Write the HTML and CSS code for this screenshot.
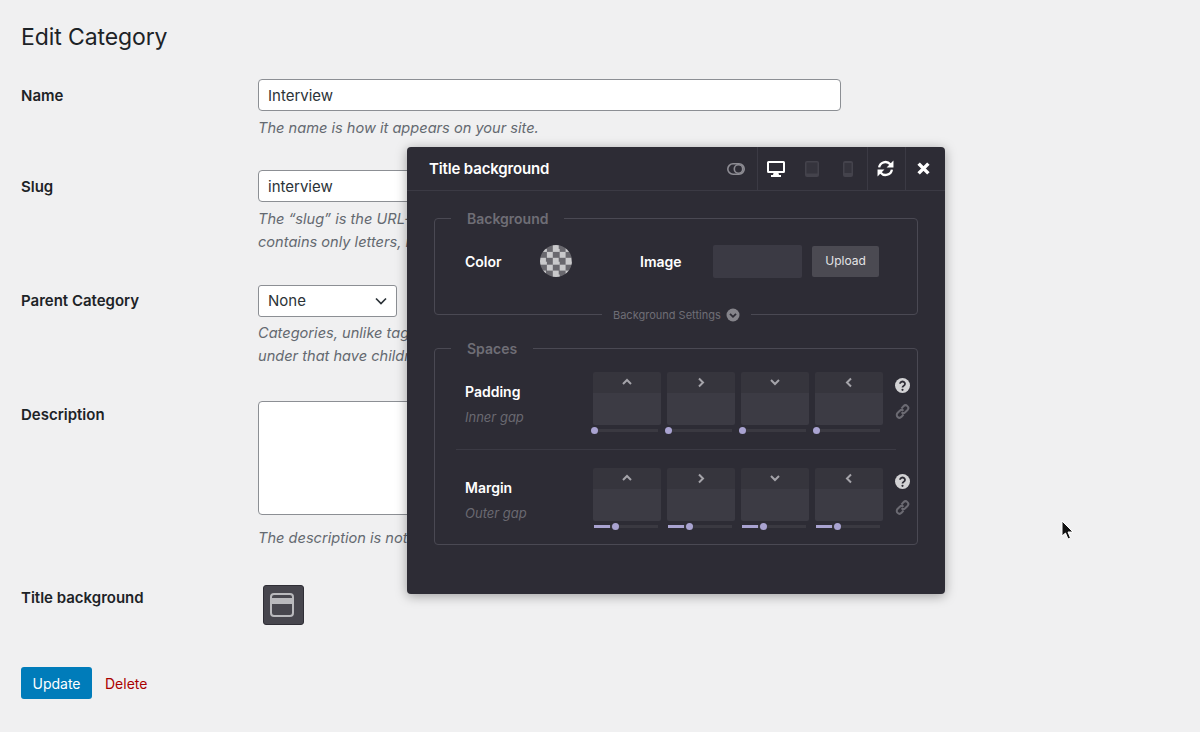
FILE: index.html
```html
<!DOCTYPE html>
<html lang="en">
<head>
    <meta charset="UTF-8">
    <title>Edit Category</title>
    <link rel="stylesheet" href="styles.css">
</head>
<body>

    <!-- Category form -->
    <div class="wrap">
        <h1>Edit Category</h1>

        <div class="form-row row-name">
            <label class="form-label">Name</label>
            <div>
                <input class="text-input" type="text" value="Interview">
                <p class="help">The name is how it appears on your site.</p>
            </div>
        </div>

        <div class="form-row row-slug">
            <label class="form-label">Slug</label>
            <div>
                <input class="text-input" type="text" value="interview">
                <p class="help">The “slug” is the URL-friendly version of the name. It is usually all lowercase and<br>contains only letters, numbers, and hyphens.</p>
            </div>
        </div>

        <div class="form-row row-parent">
            <label class="form-label">Parent Category</label>
            <div>
                <select class="select-input"><option>None</option></select>
                <p class="help help-tight">Categories, unlike tags, can have a hierarchy. You might have a Jazz category, and<br>under that have children categories for Bebop and Big Band. Totally optional.</p>
            </div>
        </div>

        <div class="form-row row-description">
            <label class="form-label">Description</label>
            <div>
                <textarea class="text-area"></textarea>
                <p class="help help-wide">The description is not prominent by default; however, some themes may show it.</p>
            </div>
        </div>

        <div class="form-row row-title-bg">
            <label class="form-label">Title background</label>
            <div>
                <button class="bg-trigger" type="button">
                    <svg width="24" height="24" viewBox="0 0 24 24">
                        <rect x="1" y="1" width="22" height="22" rx="3" fill="none" stroke="#b9b9bd" stroke-width="2"/>
                        <rect x="2" y="5" width="20" height="6" fill="#b9b9bd"/>
                    </svg>
                </button>
            </div>
        </div>

        <div class="form-actions">
            <button class="btn-update" type="button">Update</button>
            <a class="link-delete" href="#">Delete</a>
        </div>
    </div>

    <!-- Floating options panel -->
    <div class="panel">
        <div class="panel-head">
            <span class="panel-title">Title background</span>
            <div class="head-tool tool-toggle">
                <svg width="18" height="12" viewBox="0 0 18 12">
                    <rect x="0.800" y="0.800" width="16.400" height="10.400" rx="5.200" fill="none" stroke="#8d8c93" stroke-width="1.600"/>
                    <circle cx="11.500" cy="6" r="4.200" fill="none" stroke="#8d8c93" stroke-width="1.600"/>
                </svg>
            </div>
            <div class="head-tool tool-devices">
                <span class="device-slot">
                    <svg width="18" height="16" viewBox="0 0 18 16">
                        <path fill="#fff" fill-rule="evenodd" d="M1.500 0h15A1.500 1.500 0 0 1 18 1.500v9a1.500 1.500 0 0 1-1.500 1.500h-5l.5 2h2v2H4v-2h2l.5-2h-5A1.500 1.500 0 0 1 0 10.500v-9A1.500 1.500 0 0 1 1.500 0zM2 2v8h14V2z"/>
                    </svg>
                </span>
                <span class="device-slot">
                    <svg width="14" height="16" viewBox="0 0 14 16">
                        <rect width="14" height="16" rx="2" fill="#44434c"/><rect x="1.500" y="1.500" width="11" height="11" fill="#35343d"/>
                    </svg>
                </span>
                <span class="device-slot">
                    <svg width="10" height="16" viewBox="0 0 10 16">
                        <rect width="10" height="16" rx="2" fill="#44434c"/><rect x="1.500" y="2" width="7" height="10" fill="#35343d"/>
                    </svg>
                </span>
            </div>
            <div class="head-tool tool-reset">
                <svg width="17" height="17" viewBox="0 0 16 16" fill="none" stroke="#fff" stroke-width="2.200">
                    <path d="M2 7a6 6 0 0 1 10.500-3L14 5.500"/><path d="M14 9a6 6 0 0 1-10.500 3L2 10.500"/>
                    <path fill="#fff" stroke="none" d="M15.500 0.500v6.500H9zM0.500 15.500V9H7z"/>
                </svg>
            </div>
            <div class="head-tool tool-close">
                <svg width="13" height="13" viewBox="0 0 12 12" stroke="#fff" stroke-width="3.200">
                    <path d="M1.500 1.500l9 9M10.500 1.500l-9 9"/>
                </svg>
            </div>
        </div>

        <div class="panel-body">
            <fieldset class="group group-bg">
                <legend>Background</legend>
                <div class="bg-row">
                    <span class="opt-label label-color">Color</span>
                    <span class="swatch"></span>
                    <span class="opt-label label-image">Image</span>
                    <span class="image-field"></span>
                    <button class="btn-upload" type="button">Upload</button>
                </div>
                <div class="bg-settings">
                    Background Settings
                    <svg width="14" height="14" viewBox="0 0 14 14">
                        <circle cx="7" cy="7" r="6.500" fill="#85848b"/>
                        <path d="M4 5.800l3 3 3-3" fill="none" stroke="#2d2c35" stroke-width="1.800"/>
                    </svg>
                </div>
            </fieldset>

            <fieldset class="group group-spaces">
                <legend>Spaces</legend>
                <div class="space-row" id="padding-row" data-label="Padding" data-hint="Inner gap" data-value="0"></div>
                <div class="space-row space-margin" id="margin-row" data-label="Margin" data-hint="Outer gap" data-value="1"></div>
            </fieldset>
        </div>
    </div>

    <!-- Mouse pointer -->
    <svg class="pointer" width="14" height="20" viewBox="0 0 14 20">
        <path d="M1 1v15l3.500-3 2.500 6 2.500-1-2.500-6H12z" fill="#111" stroke="#fff" stroke-width="1"/>
    </svg>

    <script>
        // Chevron for each side, in CSS box order
        const sides = ['M2 7l4-4 4 4', 'M4 1.500l4 4-4 4', 'M2 3l4 4 4-4', 'M8 1.500l-4 4 4 4'];

        // Fill the padding and margin rows with their four boxes
        document.querySelectorAll('.space-row').forEach((row) => {
            const moved = row.dataset.value === '1';

            const boxes = sides.map((d) => `
                <div class="space-box">
                    <div class="box-head">
                        <svg width="12" height="11" viewBox="0 0 12 11" fill="none" stroke="#a5a4aa" stroke-width="2"><path d="${d}"/></svg>
                    </div>
                    <div class="box-value"></div>
                    <div class="slider ${moved ? 'slider-moved' : ''}">
                        <span class="slider-fill"></span>
                        <span class="slider-thumb"></span>
                    </div>
                </div>
            `).join('');

            row.innerHTML = `
                <div class="space-text">
                    <span class="opt-label">${row.dataset.label}</span>
                    <span class="hint">${row.dataset.hint}</span>
                </div>
                <div class="space-boxes">${boxes}</div>
                <div class="space-tools">
                    <svg width="15" height="15" viewBox="0 0 15 15">
                        <circle cx="7.500" cy="7.500" r="7.500" fill="#d2d2d4"/>
                        <path d="M5 5.800a2.500 2.300 0 1 1 3.800 2c-.8.500-1.300.8-1.300 1.700" fill="none" stroke="#2d2c35" stroke-width="1.800"/>
                        <circle cx="7.500" cy="11.800" r="1.100" fill="#2d2c35"/>
                    </svg>
                    <svg width="15" height="15" viewBox="0 0 15 15" fill="none" stroke="#6b6a72" stroke-width="2">
                        <path d="M6.500 4.500l2-2.300a2.700 2.700 0 0 1 4 3.800l-2.300 2.300a2.700 2.700 0 0 1-3.700 0"/>
                        <path d="M8.500 10.500l-2 2.300a2.700 2.700 0 0 1-4-3.800l2.300-2.300a2.700 2.700 0 0 1 3.700 0"/>
                    </svg>
                </div>
            `;
        });
    </script>

</body>
</html>
```

FILE: styles.css
```css
* {
    box-sizing: border-box;
}

body {
    margin: 0;
    height: 732px;
    overflow: hidden;
    background: #f0f0f1;
    color: #1d2327;
    font-family: 'Inter', sans-serif;
    font-size: 15px;
}

.wrap {
    padding: 22px 0 0 21px;
}

h1 {
    margin: 0 0 27px;
    font-size: 23px;
    font-weight: 400;
    line-height: 30px;
    letter-spacing: -0.1px;
}

.form-row {
    display: flex;
}

.row-name { margin-bottom: 30px; }
.row-slug { margin-bottom: 31px; }
.row-parent { margin-bottom: 33px; }
.row-description { margin-bottom: 35px; }
.row-title-bg { margin-bottom: 42px; }

.form-label {
    width: 237px;
    flex: none;
    padding-top: 8px;
    font-weight: 600;
    line-height: 18px;
}

.row-parent .form-label {
    padding-top: 7px;
}

.row-description .form-label {
    padding-top: 5px;
}

.row-title-bg .form-label {
    padding-top: 4px;
}

.text-input {
    display: block;
    width: 583px;
    height: 32px;
    padding: 0 9px;
    border: 1px solid #8c8f94;
    border-radius: 4px;
    background: #fff;
    color: #2c3338;
    font-family: inherit;
    font-size: 15px;
}

.select-input {
    display: block;
    width: 139px;
    height: 32px;
    padding: 0 0 2px 9px;
    border: 1px solid #8c8f94;
    border-radius: 3px;
    appearance: none;
    background: #fff url("data:image/svg+xml,%3Csvg xmlns='http://www.w3.org/2000/svg' width='12' height='8'%3E%3Cpath d='M1 1.500l5 5 5-5' fill='none' stroke='%232c3338' stroke-width='1.700'/%3E%3C/svg%3E") no-repeat right 9px center;
    color: #2c3338;
    font-family: inherit;
    font-size: 15px;
}

.text-area {
    display: block;
    width: 583px;
    height: 114px;
    border: 1px solid #8c8f94;
    border-radius: 4px;
    background: #fff;
    resize: none;
}

.help {
    margin: 6px 0 0;
    color: #646970;
    font-size: 14.6px;
    font-style: italic;
    line-height: 23px;
    white-space: nowrap;
}

.help-tight {
    margin-top: 5px;
}

.help-wide {
    margin-top: 12px;
}

.bg-trigger {
    display: flex;
    align-items: center;
    justify-content: center;
    width: 41px;
    height: 40px;
    margin: 0 0 0 5px;
    padding: 0 3px 0 0;
    border: 1px solid #2f2e36;
    border-radius: 3px;
    background: #47464e;
}

.form-actions {
    display: flex;
    align-items: center;
}

.btn-update {
    width: 71px;
    height: 32px;
    padding: 0;
    border: none;
    border-radius: 3px;
    background: #007cba;
    color: #fff;
    font-family: inherit;
    font-size: 14px;
    font-weight: 400;
}

.link-delete {
    margin-left: 13px;
    color: #a00;
    font-size: 14px;
    text-decoration: none;
}

/* Options panel, floats over the form */
.panel {
    position: absolute;
    top: 147px;
    left: 407px;
    width: 538px;
    height: 447px;
    border-radius: 4px;
    background: #2d2c35;
    box-shadow: 0 2px 12px rgba(0, 0, 0, 0.35);
    color: #fff;
}

.panel-head {
    display: flex;
    align-items: stretch;
    height: 44px;
    border-bottom: 1px solid #3b3a44;
}

.panel-title {
    flex: 1;
    padding-left: 22px;
    font-size: 15px;
    font-weight: 600;
    line-height: 43px;
    letter-spacing: -0.15px;
}

.head-tool {
    display: flex;
    align-items: center;
    justify-content: center;
}

.tool-toggle {
    width: 29px;
    margin-right: 7px;
}

.tool-devices {
    width: 110px;
    justify-content: flex-start;
    border-left: 1px solid #3b3a44;
}

.device-slot {
    display: flex;
    justify-content: center;
    width: 36px;
}

.tool-reset {
    width: 38px;
    padding-right: 3px;
    border-left: 1px solid #3b3a44;
}

.tool-close {
    width: 40px;
    padding-right: 4px;
    border-left: 1px solid #3b3a44;
}

.panel-body {
    padding: 17px 27px 0;
}

.group {
    position: relative;
    min-width: 0;
    margin: 0;
    padding: 0;
    border: 1px solid #4a4953;
    border-radius: 4px;
}

.group legend {
    margin-left: 16px;
    padding: 2px 16px 0;
    color: #6f6e76;
    font-size: 14px;
    font-weight: 600;
    line-height: 18px;
}

.group-bg {
    height: 107px;
    margin-bottom: 23px;
}

.group-spaces {
    height: 207px;
}

.bg-row {
    display: flex;
    align-items: center;
    height: 32px;
    margin-top: 17px;
    padding-left: 30px;
}

.opt-label {
    font-size: 14px;
    font-weight: 600;
    line-height: 18px;
}

.bg-row .opt-label {
    padding-top: 2px;
}

.label-color {
    width: 75px;
}

.swatch {
    width: 32px;
    height: 32px;
    border-radius: 50%;
    background: repeating-conic-gradient(#69686e 0 25%, #c9c9cb 0 50%) 0 0 / 12.800px 12.800px;
}

.label-image {
    margin-left: 68px;
    width: 73px;
}

.image-field {
    width: 89px;
    height: 33px;
    border-radius: 2px;
    background: #3b3a44;
}

.btn-upload {
    width: 67px;
    height: 31px;
    margin-left: 10px;
    padding: 0 0 2px;
    border: none;
    border-radius: 2px;
    background: #4b4a52;
    color: #e4e4e6;
    font-family: inherit;
    font-size: 12px;
    font-weight: 400;
}

/* Sits on the bottom border of the group */
.bg-settings {
    position: absolute;
    left: 167px;
    bottom: -9px;
    display: flex;
    align-items: center;
    gap: 5px;
    height: 16px;
    padding: 0 11px;
    background: #2d2c35;
    color: #6f6e76;
    font-size: 11px;
}

.space-row {
    display: flex;
    height: 78px;
    margin: 14px 21px 0;
    border-bottom: 1px solid #3b3a44;
}

.space-margin {
    margin-top: 18px;
    border-bottom: none;
}

.space-text {
    display: flex;
    flex-direction: column;
    gap: 8px;
    flex: none;
    width: 137px;
    padding: 11px 0 0 9px;
}

.hint {
    color: #6a6971;
    font-size: 13px;
    font-style: italic;
    line-height: 16px;
}

.space-boxes {
    display: flex;
    flex: none;
    gap: 6px;
}

.space-box {
    width: 68px;
}

.box-head {
    display: flex;
    align-items: center;
    justify-content: center;
    height: 21px;
    padding-bottom: 1px;
    border-radius: 2px 2px 0 0;
    background: #36353d;
}

.box-value {
    height: 32px;
    border-radius: 0 0 2px 2px;
    background: #3c3b44;
}

.slider {
    position: relative;
    height: 3px;
    margin: 4px 3px 0 1px;
    background: #3a3941;
}

.slider-fill {
    display: block;
    width: 0;
    height: 100%;
    background: #a9a3d1;
}

.slider-thumb {
    position: absolute;
    top: -2px;
    left: -3px;
    width: 7px;
    height: 7px;
    border-radius: 50%;
    background: #a9a3d1;
}

.slider-moved .slider-fill {
    width: 16px;
}

.slider-moved .slider-thumb {
    left: 18px;
}

.space-tools {
    display: flex;
    flex-direction: column;
    align-items: center;
    flex: none;
    gap: 11px;
    margin-right: -14px;
    padding: 6px 0 0 12px;
}

.pointer {
    position: absolute;
    top: 520px;
    left: 1061px;
}
```
